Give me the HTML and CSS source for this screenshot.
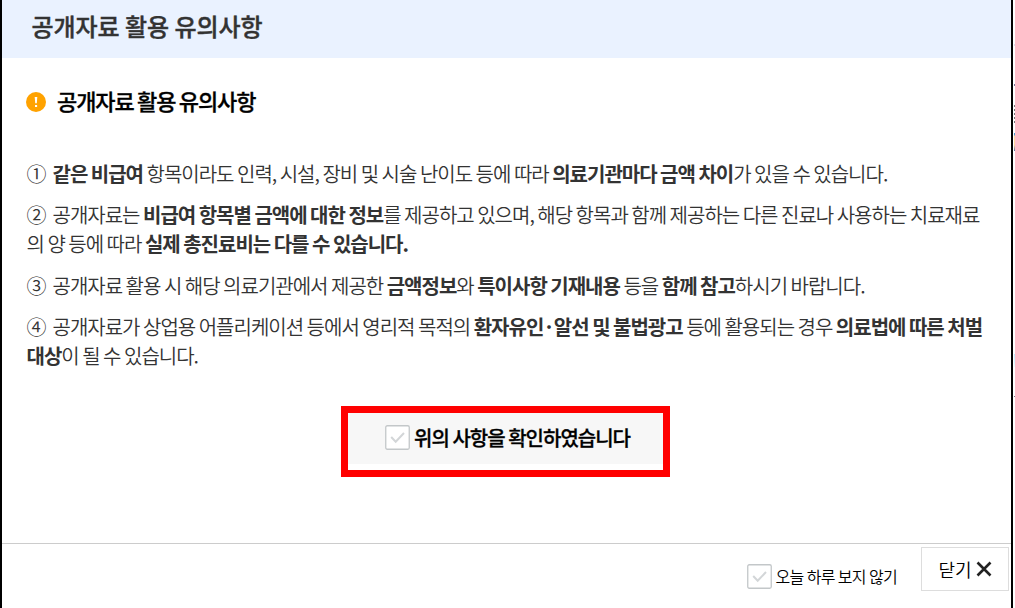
FILE: index.html
```html
<!DOCTYPE html>
<html lang="ko">
<head>
<meta charset="utf-8">
<title>공개자료 활용 유의사항</title>
<link rel="stylesheet" href="styles.css">
</head>
<body>
<div class="stage">
  <main class="dialog">
    <h1 class="dialog-title">공개자료 활용 유의사항</h1>
    <section class="content">
      <h2 class="heading">
        <svg class="alert" viewBox="0 0 20 20"><circle cx="10" cy="10" r="10" fill="#ffa200"/><path d="M8.7 5h2.6l-.5 6.2H9.2z" fill="#fff"/><rect x="9" y="13" width="2.1" height="2" fill="#fff"/></svg>
        <span>공개자료 활용 유의사항</span>
      </h2>
      <div class="notes">
        <p><span class="num">①</span><b>같은 비급여</b> 항목이라도 인력, 시설, 장비 및 시술 난이도 등에 따라 <b>의료기관마다 금액 차이</b>가 있을 수 있습니다.</p>
        <p><span class="num">②</span>공개자료는 <b>비급여 항목별 금액에 대한 정보</b>를 제공하고 있으며, 해당 항목과 함께 제공하는 다른 진료나 사용하는 치료재료<br>의 양 등에 따라 <b>실제 총진료비는 다를 수 있습니다.</b></p>
        <p><span class="num">③</span>공개자료 활용 시 해당 의료기관에서 제공한 <b>금액정보</b>와 <b>특이사항 기재내용</b> 등을 <b>함께 참고</b>하시기 바랍니다.</p>
        <p><span class="num">④</span>공개자료가 상업용 어플리케이션 등에서 영리적 목적의 <b>환자유인<span class="dot">·</span>알선 및 불법광고</b> 등에 활용되는 경우 <b>의료법에 따른 처벌<br>대상</b>이 될 수 있습니다.</p>
      </div>
      <div class="confirm">
        <label class="confirm-label">
          <svg class="box" viewBox="0 0 25 25"><rect x=".75" y=".75" width="23.5" height="23.5" rx="1.5" fill="#fff" stroke="#c3c7c9" stroke-width="1.3"/><path d="M6.2 12l4.5 4.7 8.3-8.7" fill="none" stroke="#d3d6d8" stroke-width="2"/></svg>
          <span>위의 사항을 확인하였습니다</span>
        </label>
      </div>
    </section>
    <footer class="footer">
      <label class="today">
        <svg class="box" viewBox="0 0 25 25"><rect x=".75" y=".75" width="23.5" height="23.5" rx="1.5" fill="#fff" stroke="#c3c7c9" stroke-width="1.3"/><path d="M6.2 12l4.5 4.7 8.3-8.7" fill="none" stroke="#d3d6d8" stroke-width="2"/></svg>
        <span>오늘 하루 보지 않기</span>
      </label>
      <button class="close" type="button"><span>닫기</span><svg class="cross" viewBox="0 0 16 16"><path d="M1.5 1.5l13 13M14.5 1.5l-13 13" stroke="#222" stroke-width="2.6"/></svg></button>
    </footer>
  </main>
  <div class="page-edge"></div>
</div>
</body>
</html>
```

FILE: styles.css
```css
* { box-sizing: border-box; margin: 0; padding: 0; }
body { font-family: "Noto Sans CJK KR", sans-serif; background: #fff; overflow: hidden; word-spacing: -1px; }
.stage { display: flex; width: 1015px; height: 608px; }
.dialog { display: flex; flex-direction: column; width: 1013px; border: solid #000; border-width: 0 2px; }
.dialog-title { height: 58px; padding-left: 29.5px; background: #eaf2ff; color: #333; font-size: 24px; font-weight: 500; letter-spacing: -0.1px; line-height: 52px; white-space: nowrap; -webkit-text-stroke: 0.4px #333; }
.content { height: 485px; padding: 26px 0 0 24px; }
.heading { display: flex; align-items: center; gap: 11px; height: 36px; color: #000; font-size: 22px; font-weight: 500; letter-spacing: -0.05em; word-spacing: -1.6px; line-height: 32px; -webkit-text-stroke: 0.3px #000; }
.heading span { padding-bottom: 4px; }
.alert { width: 20px; height: 20px; }
.notes { margin-top: 39px; padding-left: 0.5px; color: #333; font-size: 20px; font-weight: 350; letter-spacing: -0.05em; word-spacing: -1.1px; line-height: 29px; white-space: nowrap; }
.notes p { margin-bottom: 12.3px; }
.notes b { font-weight: 700; }
.num { display: inline-block; width: 26px; }
.dot { margin: 0 2.5px; }
.confirm { display: flex; justify-content: center; width: 329px; height: 71px; margin: 36px 0 0 315px; padding-left: 4px; border: 7px solid #f00; background: linear-gradient(#f7f7f7 51px, #fff 51px) padding-box; }
.confirm-label { display: flex; align-items: center; gap: 4px; height: 50px; color: #000; font-size: 20px; font-weight: 500; letter-spacing: -0.05em; white-space: nowrap; -webkit-text-stroke: 0.3px #000; }
.box { flex: none; width: 25px; height: 25px; }
.footer { display: flex; justify-content: flex-end; gap: 24px; height: 65px; padding: 3px 2px 0 0; border-top: 1px solid #ccc; }
.today { display: flex; align-items: center; gap: 4px; height: 59px; color: #000; font-size: 16px; font-weight: 350; letter-spacing: -0.045em; word-spacing: -0.6px; white-space: nowrap; }
.today span { padding-bottom: 1px; }
.close { display: flex; align-items: center; justify-content: center; gap: 4px; width: 88px; height: 44px; border: 1px solid #ddd; background: #fff; color: #000; font: 350 18px/1 "Noto Sans CJK KR", sans-serif; }
.cross { width: 16px; height: 16px; }
.page-edge { width: 2px; background: linear-gradient(#dde 0 0) 1px 44px / 1px 2px no-repeat, linear-gradient(#779 0 0) 1px 84px / 1px 2px no-repeat, repeating-linear-gradient(#777 0 2px, #fff 2px 4px) 1px 105px / 1px 18px no-repeat, linear-gradient(#4d9bd0 0 2px, #ffd7a0 3px 12px, #536c98 18px) 1px 133px / 1px 18px no-repeat, linear-gradient(#bdeaff, #eaffff) 1px 354px / 1px 13px no-repeat, linear-gradient(#778 0 0) 1px 396px / 1px 1px no-repeat; }
```
